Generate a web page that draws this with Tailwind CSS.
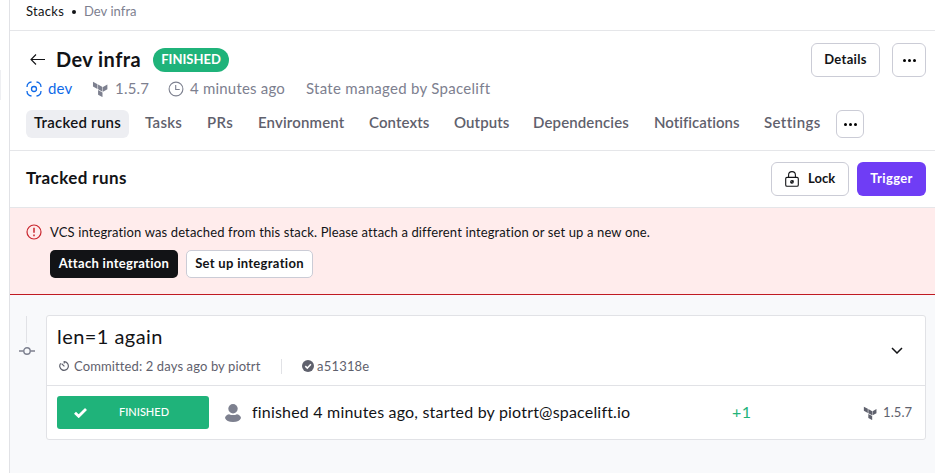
<!DOCTYPE html>
<html lang="en"><head><meta charset="utf-8"><title>Dev infra</title>
<script src="https://cdn.jsdelivr.net/npm/@tailwindcss/browser@4"></script></head>
<body class="bg-white font-['Lato','Noto_Sans',sans-serif] text-[#121316] overflow-hidden whitespace-nowrap">
<svg class="hidden"><symbol id="tf" viewBox="0 0 16 16"><path d="M1 0.8l4.6 2.7v5.1L1 5.9zM6.2 3.8l4.5 2.6v5.2L6.2 9zM11.2 6.4l4.5-2.6V9l-4.5 2.6zM6.2 9.8l4.5 2.6v5.1L6.2 15z" transform="scale(.98 .92)"/></symbol></svg>
<div class="flex h-[473px] w-[935px]">
<aside class="w-[10px] shrink-0 border-r border-[#e1e2e6] pt-[70px]"><div class="h-[30px] w-px bg-[#eeeff2]"></div></aside>
<main class="flex min-w-0 flex-1 flex-col bg-[#f8f9fb]">
<nav class="flex h-[31px] shrink-0 items-center border-b border-[#e5e6e9] bg-white pb-2 pl-4 text-[13px] leading-4">
<span class="w-[38px] tracking-[.3px]">Stacks</span><span class="ml-2 mr-2 mt-[2px] size-1 rounded-full bg-[#121316]"></span><span class="tracking-[.05px] text-[#7d808f]">Dev infra</span></nav>
<header class="h-[120px] shrink-0 border-b border-[#e5e6e9] bg-white pl-4 pr-[9px] pt-3">
<div class="flex h-[34px] items-center">
<svg class="-mt-[2px] ml-1 mr-[11px] h-4 w-[15px]" viewBox="0 0 15 16" fill="none" stroke="#121316" stroke-width="1.1"><path d="M15 8.500H1M6 3.500l-5 5 5 5"/></svg>
<h1 class="w-[84px] pb-[3px] text-[20px] font-bold leading-6 tracking-[.42px]">Dev infra</h1>
<span class="ml-[13px] flex h-6 w-[76px] items-center justify-center rounded-full bg-[#1fb37a] text-[13px] font-bold text-white">FINISHED</span>
<button class="ml-auto h-[34px] w-[69px] rounded-md border border-[#cbccd6] text-[13px] font-bold tracking-[.3px]">Details</button>
<button class="ml-3 flex size-[34px] items-center justify-center gap-[2px] rounded-md border border-[#cbccd6]"><i class="size-[3px] rounded-full bg-black"></i><i class="size-[3px] rounded-full bg-black"></i><i class="size-[3px] rounded-full bg-black"></i></button></div>
<div class="flex h-6 items-center text-[15px] tracking-[.2px] text-[#7d808f]">
<svg class="mr-[6px] size-4" viewBox="0 0 16 16" fill="none" stroke="#0f6ae8" stroke-width="1.3"><circle cx="8" cy="8" r="2.500"/><path d="M1 6Q1 3.300 2.500 2.200 3.500 1.200 5.500 1M10.500 1Q12.500 1.200 13.500 2.200 15 3.300 15 6M15 10Q15 12.700 13.500 13.800 12.500 14.800 10.500 15M5.500 15Q3.500 14.800 2.500 13.800 1 12.700 1 10"/></svg><span class="w-6 pb-[2px] text-[#0f6ae8]">dev</span>
<svg class="ml-5 mr-[7px] size-4" fill="#7d808f"><use href="#tf"/></svg><span class="w-[33px] pb-[2px]">1.5.7</span>
<svg class="ml-5 mr-[6px] size-4" viewBox="0 0 16 16" fill="none" stroke="#7d808f" stroke-width="1.1"><circle cx="8" cy="8" r="6.9"/><path d="M7.7 4v4.500h4"/></svg><span class="w-[95px] pb-[2px]">4 minutes ago</span><span class="ml-[21px] pb-[2px] tracking-[.28px]">State managed by Spacelift</span></div>
<div class="mt-[9px] flex h-7 items-center text-[15px] font-semibold text-[#5f616d]">
<span class="flex h-7 w-[103px] items-center rounded-md bg-[#edeef2] pb-[3px] pl-2 tracking-[.25px] text-[#121316]">Tracked runs</span>
<span class="ml-4 w-[38px] pb-[3px] tracking-[.3px]">Tasks</span><span class="ml-6 w-[27px] pb-[3px] tracking-[.4px]">PRs</span><span class="ml-6 w-[87px] pb-[3px] tracking-[.15px]">Environment</span><span class="ml-6 w-[61px] pb-[3px] tracking-[.1px]">Contexts</span><span class="ml-6 w-[56px] pb-[3px] tracking-[.1px]">Outputs</span><span class="-mr-px ml-[23px] w-[98px] pb-[3px] tracking-[.13px]">Dependencies</span><span class="ml-6 w-[86px] pb-[3px] tracking-[.02px]">Notifications</span><span class="ml-6 w-[56px] pb-[3px] tracking-[.4px]">Settings</span>
<button class="ml-4 flex size-7 items-center justify-center gap-[2px] rounded-md border border-[#cbccd6]"><i class="size-[3px] rounded-full bg-black"></i><i class="size-[3px] rounded-full bg-black"></i><i class="size-[3px] rounded-full bg-black"></i></button></div>
</header>
<section class="flex h-[57px] shrink-0 items-center border-b border-[#e5e6e9] bg-white pl-4 pr-[9px]">
<h2 class="pb-[2px] text-[17px] font-bold tracking-[.4px]">Tracked runs</h2>
<button class="ml-auto flex h-[34px] w-[78px] items-center rounded-md border border-[#cbccd6] pl-[13px] text-[13px] font-bold"><svg class="mr-[9px] h-4 w-[14px]" viewBox="0 0 14 16" fill="none" stroke="#121316" stroke-width="1.1"><rect x=".7" y="6.4" width="12.6" height="8.8" rx="1.3"/><path d="M3.6 6.2V4a3.4 3.4 0 016.8 0v2.2M5.7 12l2.7-2.4"/><circle cx="7" cy="10.8" r="1.3"/></svg>Lock</button>
<button class="ml-2 h-[34px] w-[69px] rounded-md bg-[#6f3df5] text-[13px] font-bold tracking-[.35px] text-white">Trigger</button></section>
<section class="flex h-[87px] shrink-0 border-b border-[#c01a22] bg-[#ffecec] pl-4 pt-4">
<svg class="mr-2 size-4" viewBox="0 0 16 16" fill="none" stroke="#c9252d" stroke-width="1.2"><circle cx="8" cy="8" r="7"/><path d="M8 3.800v5M8 10.600v1.600" stroke-width="1.500"/></svg>
<div><p class="text-[13px] leading-4 tracking-[.13px]">VCS integration was detached from this stack. Please attach a different integration or set up a new one.</p>
<div class="mt-[10px] flex gap-2 text-[13px] font-bold tracking-[.3px]"><button class="h-7 w-32 rounded-[5px] bg-[#121316] text-white">Attach integration</button><button class="h-7 w-[127px] rounded-[5px] border border-[#cbccd6] bg-white">Set up integration</button></div></div></section>
<section class="flex pl-[9px] pr-[9px] pt-5">
<div class="flex w-[27px] shrink-0 flex-col items-start"><i class="ml-[7px] mt-[1px] h-[27px] w-px bg-[#e1e2e6]"></i><svg class="mt-[4px] h-2 w-4" viewBox="0 0 16 8" fill="none" stroke="#7d808f" stroke-width="1.400"><circle cx="8" cy="4" r="3.2"/><path d="M0 4h4.800M11.200 4H16"/></svg></div>
<article class="h-[125px] flex-1 rounded-[3px] border border-[#e1e2e6] bg-white">
<div class="flex h-[70px] items-center border-b border-[#e1e2e6] pl-[10px] pr-[22px]"><div class="flex-1"><h3 class="-mt-[3px] h-[29px] text-[20px] leading-6 tracking-[.45px]">len=1 again</h3>
<div class="mt-[5px] flex h-4 items-center text-[13px] leading-4 tracking-[.12px] text-[#5f616d]"><svg class="-mt-px ml-[2px] mr-[5px] size-[10px]" viewBox="0 0 10 10" fill="none" stroke="#5f616d"><path d="M5.200 2.500V.7A4.300 4.300 0 1 1 1.700 2.300M2.600 2.600L5.400 5.400" stroke-width="1.200"/></svg><span class="w-[187px]">Committed: 2 days ago by piotrt</span><i class="ml-5 mr-5 h-[15px] w-px bg-[#e1e2e6]"></i><svg class="-mt-px mr-[3px] size-3" viewBox="0 0 12 12"><circle cx="6" cy="6" r="6" fill="#5f616d"/><path d="M3.300 6.100l2 2 3.600-3.800" fill="none" stroke="#fff" stroke-width="1.500"/></svg><span class="tracking-[.2px]">a51318e</span></div></div>
<svg class="h-[7px] w-3" viewBox="0 0 12 7" fill="none" stroke="#121316" stroke-width="1.500"><path d="M1 1l5 5 5-5"/></svg></div>
<div class="flex h-[53px] items-center pl-[10px] pr-[13px]">
<div class="flex h-[33px] w-[152px] items-center rounded-[3px] bg-[#1fb37a] text-[11px] text-white"><svg class="ml-[17px] h-[10px] w-[13px]" viewBox="0 0 13 10" fill="none" stroke="#fff" stroke-width="2.800"><path d="M1 4.800l3.700 3.500L12 1.100"/></svg><span class="flex-1 pb-px pl-8 font-medium">FINISHED</span></div>
<svg class="ml-[15px] size-[18px] shrink-0" viewBox="0 0 18 18" fill="#7d808f"><circle cx="9" cy="4.800" r="4.700"/><path d="M1 14Q1.300 11.200 5 10.200Q9 12 13 10.200Q16.700 11.200 17 14Q15.500 17.900 9 18Q2.500 17.900 1 14z"/></svg>
<span class="ml-[10px] w-[378px] pb-[2px] text-[16px] tracking-[.19px]">finished 4 minutes ago, started by piotrt@spacelift.io</span>
<span class="ml-[102px] pb-[2px] text-[16px] tracking-[.4px] text-[#1fb37a]">+1</span>
<svg class="ml-auto mr-[6px] size-[14px]" viewBox="0 0 16 16" fill="#5f616d"><use href="#tf"/></svg><span class="w-[29px] text-[13px] tracking-[.1px] text-[#5f616d]">1.5.7</span></div></article></section>
</main></div>
</body></html>
